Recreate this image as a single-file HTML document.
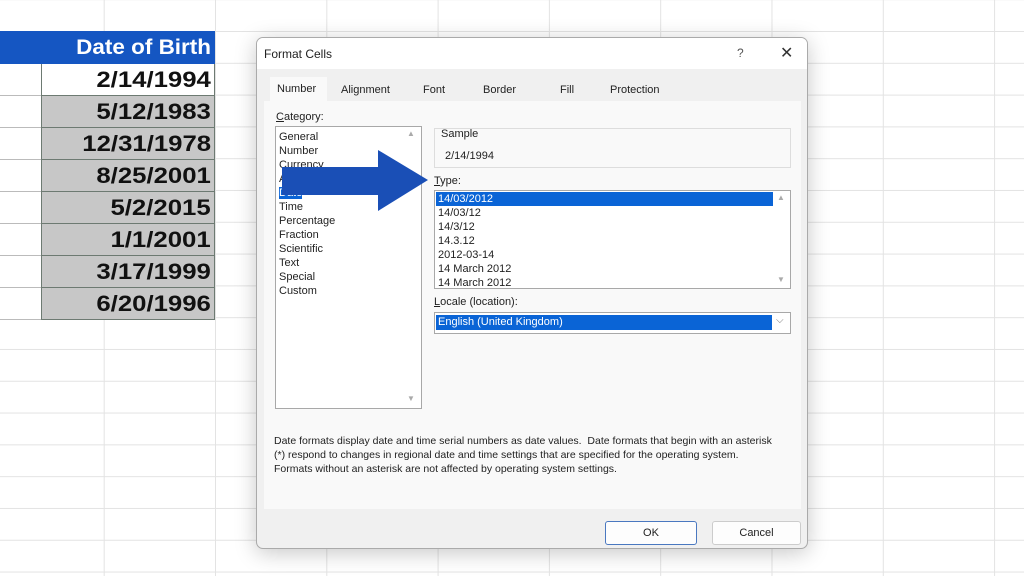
<!DOCTYPE html>
<html><head><meta charset="utf-8"><style>
*{margin:0;padding:0;box-sizing:border-box}
body{width:1024px;height:576px;overflow:hidden;position:relative;background:#fff;font-family:"Liberation Sans",sans-serif;
background-image:linear-gradient(#e3e3e3 1px,transparent 1px),linear-gradient(90deg,#e3e3e3 1px,transparent 1px);
background-size:111.3px 31.8px;background-position:215px 31px}
.abs{position:absolute}
.hdr{left:0;top:31px;width:215px;height:33px;background:#1556c2;color:#fff;font-weight:bold;font-size:21px;text-align:right;padding-right:4px;line-height:33px}
.hdr span{display:inline-block;transform:scaleX(1.07);transform-origin:right}
.cell{left:41px;width:174px;height:32px;background:#c7c7c7;border:1px solid #6d7a72;border-top:none;font-weight:bold;font-size:22px;text-align:right;padding-right:3px;line-height:32px;color:#111}
.cell span{display:inline-block;transform:scaleX(1.17);transform-origin:right}
.dlg{left:256px;top:37px;width:552px;height:512px;background:#f0f0f0;border:1px solid #aaa;border-radius:7px;box-shadow:0 4px 22px rgba(0,0,0,.22);font-size:11px;color:#222;overflow:hidden}
.title{position:absolute;left:0;top:0;width:100%;height:31px;background:#fff}
.panel{position:absolute;left:7px;top:63px;width:537px;height:408px;background:#f9f9f9}
.box{position:absolute;background:#fff;border:1px solid #a8a8a8}
.t{position:absolute;white-space:nowrap}
.btn{position:absolute;top:483px;height:24px;background:#fdfdfd;border:1px solid #ccc;border-radius:3px;text-align:center;line-height:22px;font-size:11px}
</style></head><body>
<div class="abs hdr"><span>Date of Birth</span></div>
<div class="abs cell" style="top:64px;background:#fff"><span>2/14/1994</span></div>
<div class="abs cell" style="top:96px"><span>5/12/1983</span></div>
<div class="abs cell" style="top:128px"><span>12/31/1978</span></div>
<div class="abs cell" style="top:160px"><span>8/25/2001</span></div>
<div class="abs cell" style="top:192px"><span>5/2/2015</span></div>
<div class="abs cell" style="top:224px"><span>1/1/2001</span></div>
<div class="abs cell" style="top:256px"><span>3/17/1999</span></div>
<div class="abs cell" style="top:288px"><span>6/20/1996</span></div>
<div class="abs" style="left:41px;top:64px;width:1px;height:256px;background:#6d7a72"></div>
<div class="abs" style="left:0;top:64px;width:41px;height:256px;background:repeating-linear-gradient(#fff 0 31px,#bbb 31px 32px)"></div>

<div class="abs dlg">
 <div class="title"><span class="t" style="left:7px;top:9px;font-size:12px">Format Cells</span>
 <span class="t" style="left:480px;top:8px;font-size:12px;color:#555">?</span>
 <span class="t" style="left:523px;top:5px;font-size:16px;color:#333">✕</span></div>
 <div class="t" style="left:13px;top:39px;width:57px;height:24px;background:#f9f9f9"></div>
 <span class="t" style="left:20px;top:45px">Number</span>
 <span class="t" style="left:84px;top:46px">Alignment</span>
 <span class="t" style="left:166px;top:46px">Font</span>
 <span class="t" style="left:226px;top:46px">Border</span>
 <span class="t" style="left:303px;top:46px">Fill</span>
 <span class="t" style="left:353px;top:46px">Protection</span>
 <div class="panel"></div>
 <span class="t" style="left:19px;top:73px"><u>C</u>ategory:</span>
 <div class="box" style="left:18px;top:88px;width:147px;height:283px"></div>
 <div class="t" style="left:22px;top:92px;line-height:14px">General<br>Number<br>Currency<br>Accounting<br><span style="background:#0a64d6;color:#fff">Date</span><br>Time<br>Percentage<br>Fraction<br>Scientific<br>Text<br>Special<br>Custom</div>
 <span class="t" style="left:150px;top:91px;font-size:8px;color:#aaa">▲</span>
 <span class="t" style="left:150px;top:356px;font-size:8px;color:#aaa">▼</span>
 <div class="box" style="left:177px;top:90px;width:357px;height:40px;background:#f9f9f9;border-color:#ddd"></div>
 <span class="t" style="left:184px;top:90px">Sample</span>
 <span class="t" style="left:188px;top:112px">2/14/1994</span>
 <span class="t" style="left:177px;top:137px"><u>T</u>ype:</span>
 <div class="box" style="left:177px;top:152px;width:357px;height:99px"></div>
 <div class="t" style="left:179px;top:154px;width:337px;height:14px;background:#0a64d6"></div>
 <div class="t" style="left:181px;top:154px;line-height:14px">
 <span style="color:#fff">14/03/2012</span><br>14/03/12<br>14/3/12<br>14.3.12<br>2012-03-14<br>14 March 2012<br>14 March 2012</div>
 <span class="t" style="left:520px;top:155px;font-size:8px;color:#aaa">▲</span>
 <span class="t" style="left:520px;top:237px;font-size:8px;color:#aaa">▼</span>
 <span class="t" style="left:177px;top:258px"><u>L</u>ocale (location):</span>
 <div class="box" style="left:177px;top:274px;width:357px;height:22px"></div>
 <div class="t" style="left:179px;top:277px;width:336px;height:15px;background:#0a64d6;color:#fff;padding-left:2px;line-height:15px">English (United Kingdom)</div>
 <span class="t" style="left:519px;top:277px;font-size:10px;color:#777">⌵</span>
 <div class="t" style="left:17px;top:396px;line-height:14px;font-size:10.5px">Date formats display date and time serial numbers as date values.&nbsp; Date formats that begin with an asterisk<br>(*) respond to changes in regional date and time settings that are specified for the operating system.<br>Formats without an asterisk are not affected by operating system settings.</div>
 <div class="btn" style="left:348px;width:92px;border:1px solid #4a78c0">OK</div>
 <div class="btn" style="left:455px;width:89px">Cancel</div>
</div>

<svg class="abs" style="left:280px;top:148px" width="152" height="66"><polygon points="2,19 98,19 98,2 148,32 98,63 98,47 2,47" fill="#1a4fb6"/></svg>
</body></html>
